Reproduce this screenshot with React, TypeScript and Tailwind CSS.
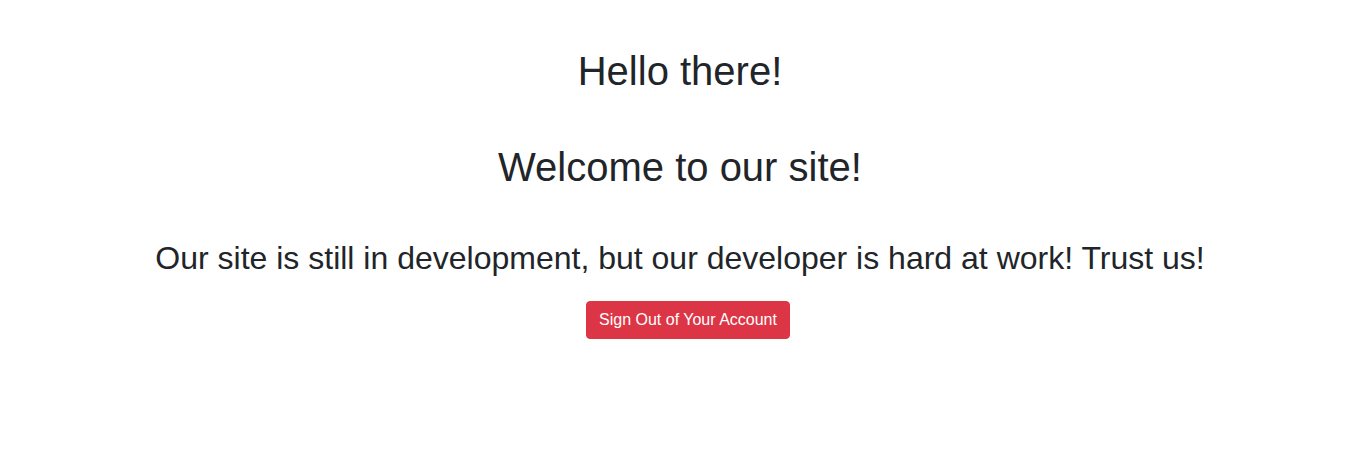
export default function App() {
  return (
    <div className="min-h-screen w-full bg-white text-[#212529] text-center font-['Liberation_Sans',Arial,sans-serif]">
      <div className="flex flex-col items-center pt-[47px] pr-[3px]">
        <h1 className="text-[40px] leading-[48px] font-normal">Hello there!</h1>
        <h1 className="text-[40px] leading-[48px] font-normal mt-[48px]">Welcome to our site!</h1>
        <h2 className="text-[32px] leading-[38px] font-normal mt-[48px]">
          Our site is still in development, but our developer is hard at work! Trust us!
        </h2>
        <button className="ml-4 mt-[24px] rounded bg-[#dc3545] border border-[#dc3545] px-3 py-[6px] text-base leading-6 text-white">
          Sign Out of Your Account
        </button>
      </div>
    </div>
  );
}
